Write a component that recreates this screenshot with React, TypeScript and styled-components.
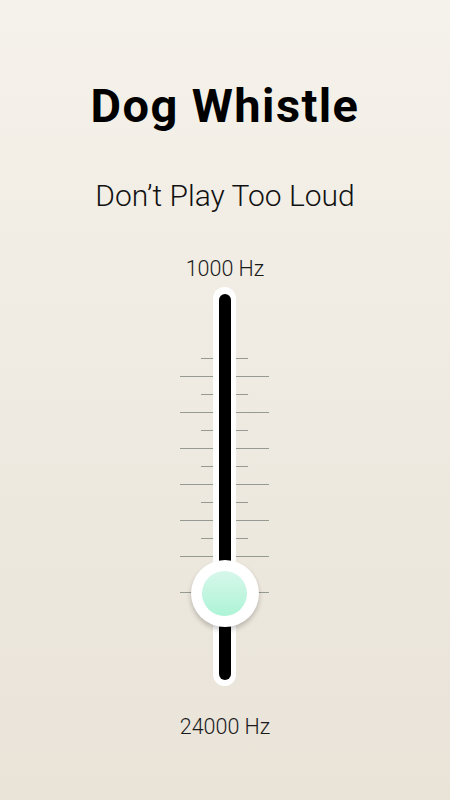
import React from 'react';
import styled, { createGlobalStyle } from 'styled-components';

const GlobalStyle = createGlobalStyle`
  html, body {
    margin: 0;
    padding: 0;
  }
  body {
    font-family: Roboto, "Liberation Sans", sans-serif;
  }
`;

const Screen = styled.div`
  width: 450px;
  height: 800px;
  display: flex;
  flex-direction: column;
  align-items: center;
  background: linear-gradient(180deg, #f5f2eb 0%, #e9e3d8 100%);
  color: #000;
  overflow: hidden;
`;

const Title = styled.h1`
  margin: 82px 0 0;
  font-size: 47px;
  line-height: 1;
  font-weight: 700;
  letter-spacing: 1.4px;
`;

const Subtitle = styled.p`
  margin: 52px 0 0;
  font-size: 30px;
  line-height: 1;
  font-weight: 300;
  color: #111;
`;

const FreqLabel = styled.span<{ $gap: number }>`
  margin-top: ${(p) => p.$gap}px;
  font-size: 21.5px;
  line-height: 1;
  font-weight: 300;
  color: #1a1a1a;
`;

const SliderRow = styled.div`
  margin-top: 7px;
  margin-right: 1px;
  display: flex;
  align-items: flex-start;
`;

const TickColumn = styled.div<{ $side: 'left' | 'right' }>`
  width: 34px;
  padding-top: 71px;
  display: flex;
  flex-direction: column;
  gap: 17px;
  align-items: ${(p) => (p.$side === 'left' ? 'flex-end' : 'flex-start')};
`;

const Tick = styled.div<{ $long: boolean }>`
  height: 1px;
  width: ${(p) => (p.$long ? 33 : 12)}px;
  background: #959a92;
`;

const Track = styled.div`
  position: relative;
  width: 23px;
  height: 399px;
  box-sizing: border-box;
  padding: 7px 5.5px 6px;
  border-radius: 12px;
  background: #fff;
`;

const Groove = styled.div`
  width: 100%;
  height: 100%;
  border-radius: 6px;
  background: #000;
`;

const Knob = styled.div`
  position: absolute;
  left: 50%;
  top: 273px;
  width: 68px;
  height: 67px;
  margin-left: -34px;
  border-radius: 50%;
  background: #fff;
  box-shadow: 0 3px 5px rgba(0, 0, 0, 0.22);
  display: flex;
  align-items: center;
  justify-content: center;
`;

const KnobCore = styled.div`
  width: 45px;
  height: 45px;
  border-radius: 50%;
  background: linear-gradient(180deg, #d7f7eb 0%, #adf4d6 100%);
`;

const ticks = Array.from({ length: 14 }, (_, i) => i % 2 === 1);

const App: React.FC = () => {
  return (
    <>
      <GlobalStyle />
      <Screen>
        <Title>Dog Whistle</Title>
        <Subtitle>Don’t Play Too Loud</Subtitle>
        <FreqLabel $gap={47}>1000 Hz</FreqLabel>
        <SliderRow>
          <TickColumn $side="left">
            {ticks.map((long, i) => (
              <Tick key={i} $long={long} />
            ))}
          </TickColumn>
          <Track>
            <Groove />
            <Knob>
              <KnobCore />
            </Knob>
          </Track>
          <TickColumn $side="right">
            {ticks.map((long, i) => (
              <Tick key={i} $long={long} />
            ))}
          </TickColumn>
        </SliderRow>
        <FreqLabel $gap={30}>24000 Hz</FreqLabel>
      </Screen>
    </>
  );
};

export default App;
